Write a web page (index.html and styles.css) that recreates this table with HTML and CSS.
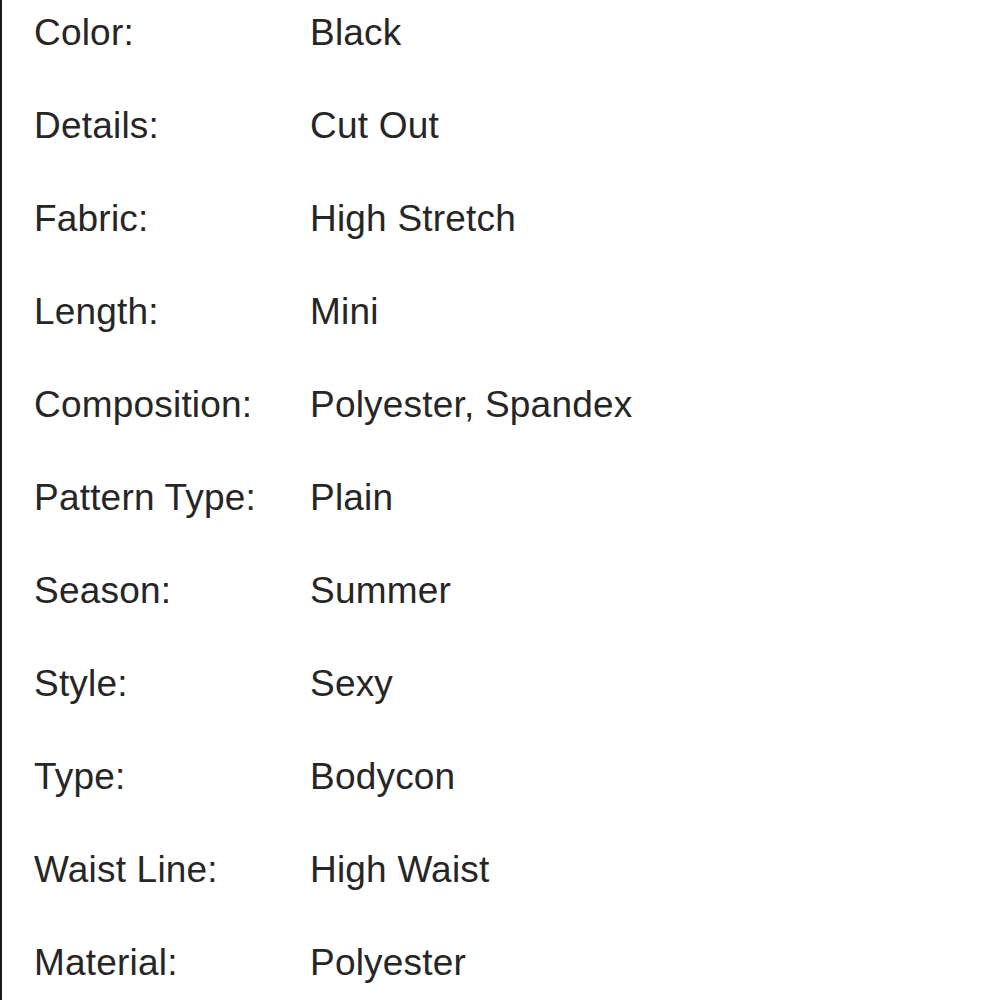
FILE: index.html
```html
<!DOCTYPE html>
<html>
<head>
<meta charset="utf-8">
<link rel="stylesheet" href="styles.css">
</head>
<body>
<div class="specs">
  <div class="label">Color:</div><div class="value">Black</div>
  <div class="label">Details:</div><div class="value">Cut Out</div>
  <div class="label">Fabric:</div><div class="value">High Stretch</div>
  <div class="label">Length:</div><div class="value">Mini</div>
  <div class="label">Composition:</div><div class="value">Polyester, Spandex</div>
  <div class="label">Pattern Type:</div><div class="value">Plain</div>
  <div class="label">Season:</div><div class="value">Summer</div>
  <div class="label">Style:</div><div class="value">Sexy</div>
  <div class="label">Type:</div><div class="value">Bodycon</div>
  <div class="label">Waist Line:</div><div class="value">High Waist</div>
  <div class="label">Material:</div><div class="value">Polyester</div>
</div>
</body>
</html>
```
FILE: styles.css
```css
html, body {
  margin: 0;
  padding: 0;
  background: #fff;
}
body {
  height: 1000px;
  overflow: hidden;
}
.specs {
  border-left: 2px solid #1a1a1a;
  min-height: 1000px;
  box-sizing: border-box;
  padding: 12px 0 0 32px;
  display: grid;
  grid-template-columns: 276px 1fr;
  row-gap: 51px;
  align-content: start;
  font-family: "Liberation Sans", Arial, sans-serif;
  font-size: 37px;
  line-height: 42px;
  letter-spacing: 0.2px;
  color: #262626;
}
.label, .value {
  white-space: nowrap;
}
```
